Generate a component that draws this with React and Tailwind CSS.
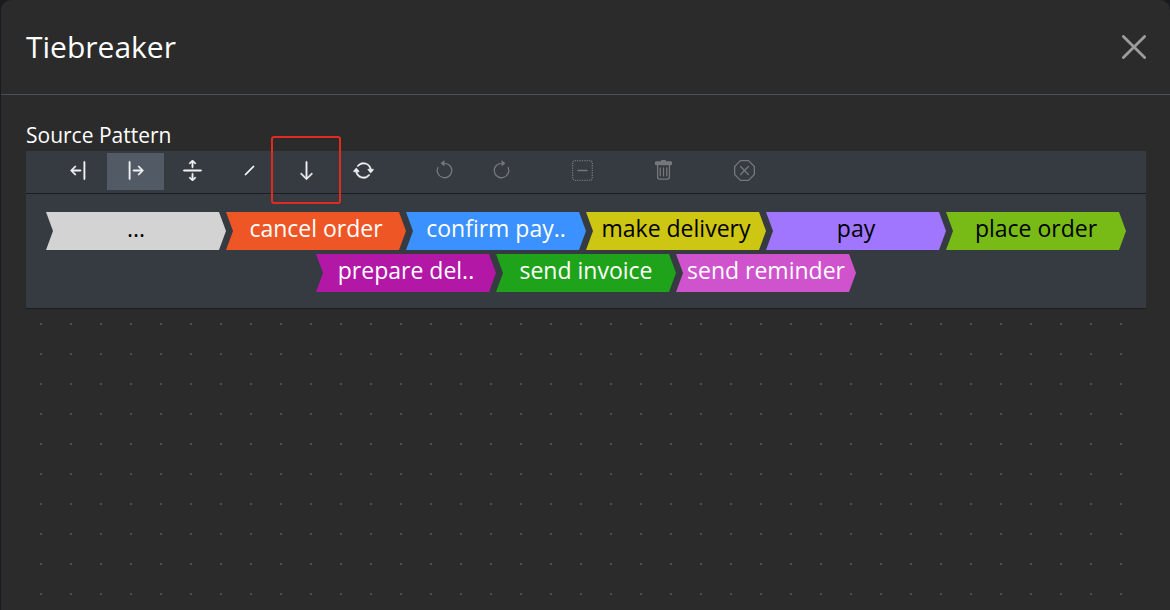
import React from "react";
import {
  BsArrowBarLeft,
  BsArrowBarRight,
  BsArrowsExpand,
  BsSlash,
  BsArrowDown,
  BsArrowRepeat,
  BsArrowCounterclockwise,
  BsArrowClockwise,
  BsDashSquareDotted,
  BsXOctagon,
} from "react-icons/bs";

function TrashIcon({ size }) {
  return (
    <svg width={size} height={size} viewBox="0 0 16 16" fill="currentColor" stroke="currentColor" strokeWidth="0" aria-hidden="true">
      <path d="M5.5 5.5A.5.5 0 0 1 6 6v6a.5.5 0 0 1-1 0V6a.5.5 0 0 1 .5-.5m2.5 0a.5.5 0 0 1 .5.5v6a.5.5 0 0 1-1 0V6a.5.5 0 0 1 .5-.5m3 .5a.5.5 0 0 0-1 0v6a.5.5 0 0 0 1 0z" />
      <path d="M14.5 3a1 1 0 0 1-1 1H13v9a2 2 0 0 1-2 2H5a2 2 0 0 1-2-2V4h-.5a1 1 0 0 1-1-1V2a1 1 0 0 1 1-1H6a1 1 0 0 1 1-1h2a1 1 0 0 1 1 1h3.5a1 1 0 0 1 1 1zM4 4.059V13a1 1 0 0 0 1 1h6a1 1 0 0 0 1-1V4.059z" />
    </svg>
  );
}

const toolGroups = [
  [
    { label: "Insert before", Icon: BsArrowBarLeft },
    { label: "Insert after", Icon: BsArrowBarRight, active: true },
    { label: "Insert parallel", Icon: BsArrowsExpand },
    { label: "Choice", Icon: BsSlash },
    { label: "Optional", Icon: BsArrowDown, marked: true },
    { label: "Repeat", Icon: BsArrowRepeat },
  ],
  [
    { label: "Undo", Icon: BsArrowCounterclockwise, disabled: true },
    { label: "Redo", Icon: BsArrowClockwise, disabled: true },
  ],
  [{ label: "Ungroup", Icon: BsDashSquareDotted, disabled: true }],
  [{ label: "Delete", Icon: TrashIcon, disabled: true }],
  [{ label: "Clear", Icon: BsXOctagon, disabled: true }],
];

const activities = [
  { name: "...", style: "bg-[#d3d3d3] text-black" },
  { name: "cancel order", style: "bg-[#ee5626] text-white" },
  { name: "confirm pay..", style: "bg-[#3a91ff] text-white" },
  { name: "make delivery", style: "bg-[#cdc613] text-black" },
  { name: "pay", style: "bg-[#a076ff] text-black" },
  { name: "place order", style: "bg-[#78bb17] text-black" },
  { name: "prepare del..", style: "bg-[#b217a6] text-white" },
  { name: "send invoice", style: "bg-[#1fa31b] text-white" },
  { name: "send reminder", style: "bg-[#cf53cd] text-white" },
];

function ToolButton({ label, Icon, active, disabled, marked }) {
  return (
    <button
      type="button"
      aria-label={label}
      aria-pressed={active ? true : undefined}
      disabled={disabled}
      className={`relative flex h-[37px] w-[57px] items-center justify-center pb-[2px] ${
        active ? "bg-[#525a66]" : ""
      } ${disabled ? "text-[#75787b]" : "text-[#f1f2f3] [&_svg]:stroke-[0.4px]"}`}
    >
      <Icon size={21} />
      {marked && (
        <span className="pointer-events-none absolute -top-[17px] -right-[6px] -bottom-[14px] -left-[7px] z-10 rounded-[3px] border-2 border-[#df2b20]" />
      )}
    </button>
  );
}

export default function App() {
  return (
    <div className="min-h-screen bg-[#181b1f] font-['Open_Sans','Noto_Sans',sans-serif] text-white">
      <main className="ml-px flex min-h-screen flex-col rounded-t-[10px] bg-[#2b2b2b]">
        <header className="flex h-[95px] items-center justify-between border-b border-[#495057] pr-6 pl-[25px]">
          <h1 className="text-[30px] leading-10">Tiebreaker</h1>
          <button type="button" aria-label="Close" className="text-[#9c9c9c]">
            <svg width="24" height="24" viewBox="0 0 24 24" fill="none" stroke="currentColor" strokeWidth="2.8" strokeLinecap="round">
              <path d="M1.4 1.4 22.6 22.6M22.6 1.4 1.4 22.6" />
            </svg>
          </button>
        </header>
        <section className="flex flex-1 flex-col pt-6 pr-6 pl-[25px]">
          <h2 className="text-[21px] leading-8">Source Pattern</h2>
          <div role="toolbar" aria-label="Pattern tools" className="flex h-[43px] gap-6 border-b border-[#1b1d20] bg-[#363a41] px-6 pt-[2px]">
            {toolGroups.map((group, i) => (
              <div key={i} className="flex">
                {group.map((tool) => (
                  <ToolButton key={tool.label} {...tool} />
                ))}
              </div>
            ))}
          </div>
          <ul className="flex flex-wrap justify-center gap-y-1 border-b border-[#1b1d20] bg-[#363a41] px-5 pt-[18px] pb-4">
            {activities.map(({ name, style }) => (
              <li
                key={name}
                className={`h-[38px] w-[180px] text-center text-[23px] leading-8 whitespace-nowrap [clip-path:polygon(0_0,calc(100%_-_7px)_0,100%_50%,calc(100%_-_7px)_100%,0_100%,7px_50%)] ${style}`}
              >
                {name}
              </li>
            ))}
          </ul>
          <div className="flex-1 bg-[conic-gradient(from_270deg_at_2px_2px,#495057_90deg,transparent_0)] bg-[size:30px_30px] bg-[position:14px_14px]" />
        </section>
      </main>
    </div>
  );
}
